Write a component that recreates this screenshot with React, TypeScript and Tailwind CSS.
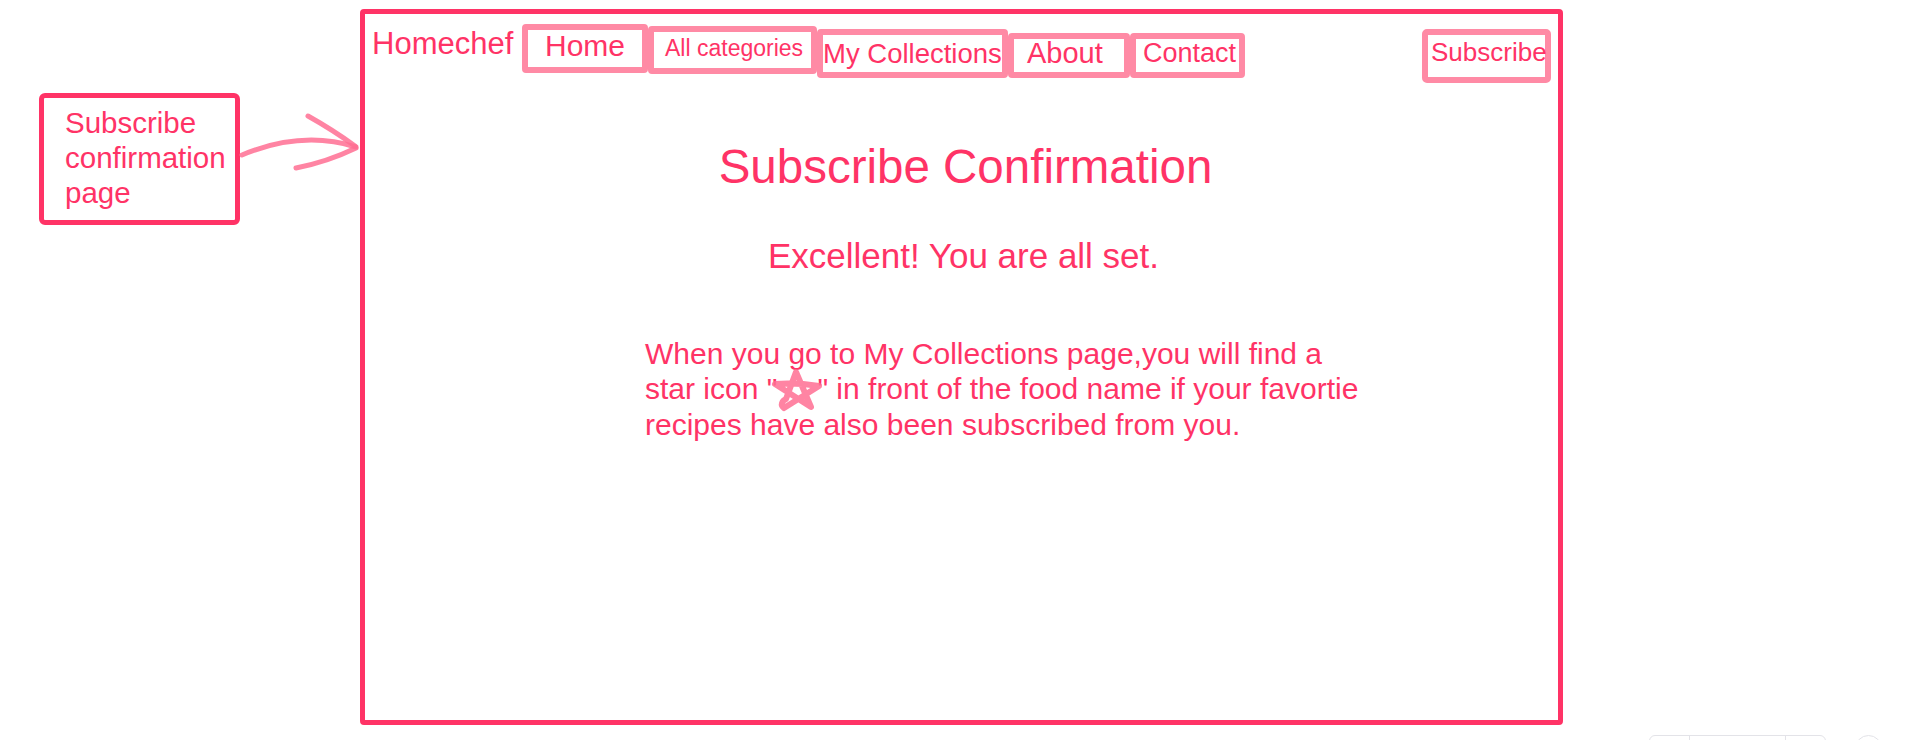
import React from 'react';

const navItems = [
  { label: 'Home', box: 'mt-[10px] w-[126px] h-[49px] pl-[17px] pt-[1px] text-[30px]' },
  { label: 'All categories', box: 'mt-[12px] w-[169px] h-[48px] pl-[11px] pt-[5px] text-[23px]' },
  { label: 'My Collections', box: 'mt-[15px] w-[191px] h-[49px] pl-[0px] pt-[5px] text-[27.5px]' },
  { label: 'About', box: 'mt-[19px] w-[122px] h-[45px] pl-[13px] pt-[0px] text-[29px]' },
  { label: 'Contact', box: 'mt-[19px] w-[115px] h-[45px] pl-[7px] pt-[1px] text-[27px]' },
];

function HandStar() {
  return (
    <span className="relative inline-block w-[40px] h-[22px] align-baseline">
      <svg
        className="absolute top-[-8px] left-[-5px] overflow-visible"
        width="50"
        height="42"
        viewBox="0 0 50 42"
        fill="none"
      >
        <path
          d="M12 39 C 8 36, 10 32, 14 30 L24 3 L39 38 L3 15 C 18 14, 34 15, 47 17 L12 39"
          stroke="#ff6f93"
          strokeOpacity="0.85"
          strokeWidth="6"
          strokeLinecap="round"
          strokeLinejoin="round"
        />
      </svg>
    </span>
  );
}

export default function App() {
  return (
    <div className="relative w-[1920px] h-[740px] overflow-hidden bg-white font-['Liberation_Sans',Arial,sans-serif] text-[#ff3366]">
      <div className="flex items-start pt-[9px] pl-[39px]">
        {/* annotation label */}
        <div className="mt-[84px] w-[201px] h-[132px] border-[5px] border-[#ff3366] rounded-[6px] pl-[21px] pt-[7px] text-[29.5px] leading-[35px]">
          Subscribe
          <br />
          confirmation
          <br />
          page
        </div>

        {/* arrow */}
        <svg className="mt-[103px] shrink-0 overflow-visible" width="120" height="62" viewBox="0 0 120 62" fill="none">
          <g stroke="#ff6f93" strokeOpacity="0.85" strokeWidth="5" strokeLinecap="round">
            <path d="M2 43 Q 62 18 116 35" />
            <path d="M68 4 Q 93 18 115 34" />
            <path d="M116 36 Q 87 50 56 56" />
          </g>
        </svg>

        {/* page frame */}
        <div className="shrink-0 w-[1203px] h-[716px] border-[5px] border-[#ff3366] rounded-[4px] flex flex-col">
          <nav className="flex items-start">
            <div className="w-[157px] pl-[7px] mt-[14px] text-[31px] leading-none">Homechef</div>
            {navItems.map((item) => (
              <div
                key={item.label}
                className={`shrink-0 border-[6px] border-[#ff8aa5] rounded-[4px] leading-none whitespace-nowrap ${item.box}`}
              >
                {item.label}
              </div>
            ))}
            <div className="ml-auto mr-[7px] mt-[15px] w-[129px] h-[54px] shrink-0 border-[6px] border-[#ff8aa5] rounded-[5px] pl-[3px] pt-[4px] text-[26px] leading-none">
              Subscribe
            </div>
          </nav>

          <h1 className="mt-[60px] text-center text-[47.5px] leading-none pl-[8px]">Subscribe Confirmation</h1>
          <p className="mt-[47px] text-center text-[35px] leading-none pl-[4px]">Excellent! You are all set.</p>

          <p className="mt-[63px] pl-[280px] text-[30px] leading-[35.5px] whitespace-nowrap">
            When you go to My Collections page,you will find a
            <br />
            star icon "<HandStar />" in front of the food name if your favortie
            <br />
            recipes have also been subscribed from you.
          </p>
        </div>
      </div>

      {/* faint canvas toolbar peeking at the bottom edge */}
      <div className="absolute left-[1649px] top-[735px] w-[177px] h-[30px] rounded-[6px] border border-[#e3e3e8] flex">
        <div className="w-[40px] border-r border-[#e3e3e8]" />
        <div className="w-[96px] border-r border-[#e3e3e8]" />
        <div className="flex-1" />
      </div>
      <div className="absolute left-[1855px] top-[735px] w-[27px] h-[27px] rounded-full border border-[#e3e3e8]" />
    </div>
  );
}
